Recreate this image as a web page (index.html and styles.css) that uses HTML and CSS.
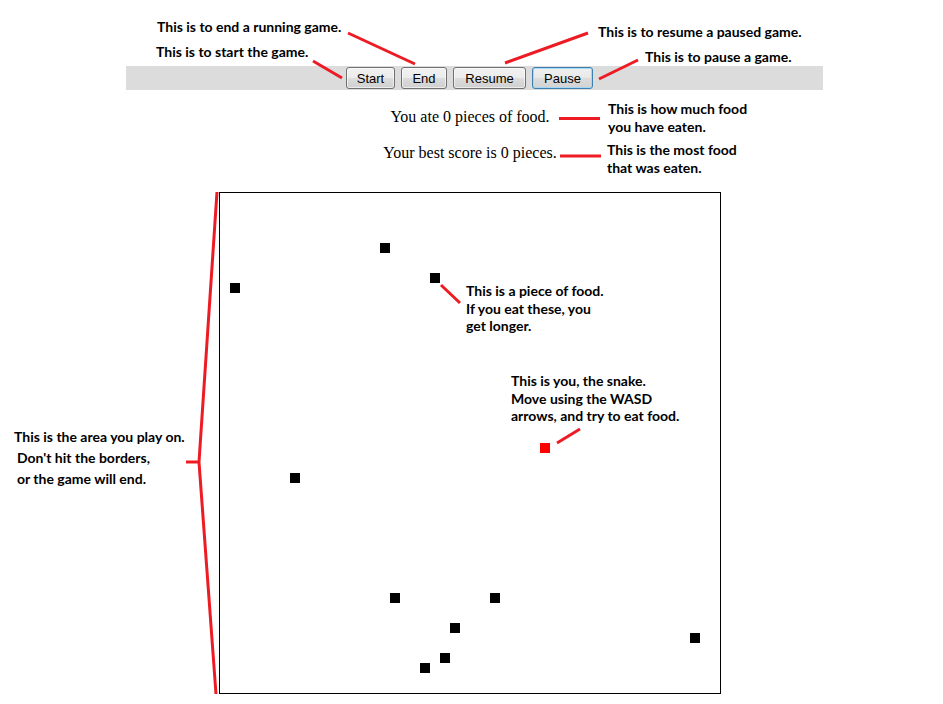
FILE: index.html
```html
<!DOCTYPE html>
<html>
<head>
<meta charset="utf-8">
<title>Snake</title>
<link rel="stylesheet" href="styles.css">
</head>
<body>
<div class="page">
  <div class="toolbar">
    <button class="btn btn-start">Start</button>
    <button class="btn btn-end">End</button>
    <button class="btn btn-resume">Resume</button>
    <button class="btn btn-pause btn-focus">Pause</button>
  </div>
  <div class="main">
    <p class="score">You ate 0 pieces of food.</p>
    <p class="score">Your best score is 0 pieces.</p>
    <div class="board">
      <span class="food" style="left:160px;top:50px"></span>
      <span class="food" style="left:10px;top:90px"></span>
      <span class="food" style="left:210px;top:80px"></span>
      <span class="food" style="left:70px;top:280px"></span>
      <span class="food" style="left:170px;top:400px"></span>
      <span class="food" style="left:270px;top:400px"></span>
      <span class="food" style="left:230px;top:430px"></span>
      <span class="food" style="left:470px;top:440px"></span>
      <span class="food" style="left:220px;top:460px"></span>
      <span class="food" style="left:200px;top:470px"></span>
      <span class="food snake" style="left:320px;top:250px"></span>
    </div>
  </div>

  <svg class="marks" width="943" height="704" viewBox="0 0 943 704">
    <g stroke="#ed1c24" stroke-width="3" fill="none">
      <line x1="348" y1="33" x2="415" y2="64"/>
      <line x1="313" y1="61" x2="342" y2="78"/>
      <line x1="588" y1="33" x2="505" y2="63"/>
      <line x1="638" y1="60" x2="599" y2="79"/>
      <line x1="559" y1="118.5" x2="600" y2="118.5"/>
      <line x1="560" y1="156" x2="601" y2="156"/>
      <line x1="441" y1="285" x2="460" y2="303"/>
      <line x1="580" y1="429" x2="557" y2="443"/>
      <polyline points="217,192 199,462 216,694"/>
      <line x1="186" y1="462" x2="199" y2="462"/>
    </g>
  </svg>

  <div class="note note-end">This is to end a running game.</div>
  <div class="note note-start">This is to start the game.</div>
  <div class="note note-resume">This is to resume a paused game.</div>
  <div class="note note-pause">This is to pause a game.</div>
  <div class="note note-eaten">This is how much food<br>you have eaten.</div>
  <div class="note note-most">This is the most food<br>that was eaten.</div>
  <div class="note note-food">This is a piece of food.<br>If you eat these, you<br>get longer.</div>
  <div class="note note-snake">This is you, the snake.<br>Move using the WASD<br>arrows, and try to eat food.</div>
  <div class="note note-area">This is the area you play on.<br><span class="indent">Don't hit the borders,</span><br><span class="indent">or the game will end.</span></div>
</div>
</body>
</html>
```

FILE: styles.css
```css
html, body {
  margin: 0;
  padding: 0;
  background: #ffffff;
}

.page {
  position: relative;
  width: 943px;
  height: 704px;
  overflow: hidden;
  padding-top: 66px;
  box-sizing: border-box;
}

.toolbar {
  margin-left: 126px;
  width: 697px;
  height: 24px;
  background: #dcdcdc;
  display: flex;
  align-items: center;
  gap: 6px;
  padding-left: 220px;
  box-sizing: border-box;
}

.btn {
  height: 22px;
  margin: 0;
  padding: 0;
  box-sizing: border-box;
  font-family: "Liberation Sans", Arial, sans-serif;
  font-size: 13px;
  color: #000;
  border: 1px solid #707070;
  border-radius: 3px;
  background: linear-gradient(to bottom, #f2f2f2 0%, #ebebeb 50%, #dddddd 51%, #cfcfcf 100%);
  box-shadow: inset 0 0 0 1px rgba(255,255,255,0.6);
}

.btn-start { width: 49px; }
.btn-end { width: 46px; }
.btn-resume { width: 73px; }
.btn-pause { width: 61px; }

.btn-focus {
  border-color: #3c7fb1;
  box-shadow: inset 0 0 0 1px #a6d8f5;
  background: linear-gradient(to bottom, #f0f0f0 0%, #e8e8e8 50%, #dcdcdc 51%, #d2d2d2 100%);
}

.main {
  margin-left: 219px;
  width: 502px;
  text-align: center;
}

.score {
  margin: 18px 0 0;
  font-family: "Liberation Serif", "Times New Roman", serif;
  font-size: 16px;
  line-height: 18px;
  color: #000;
}

.board {
  position: relative;
  margin-top: 30px;
  width: 500px;
  height: 500px;
  border: 1px solid #000;
}

.food {
  position: absolute;
  width: 10px;
  height: 10px;
  background: #000;
}

.snake {
  background: #ff0000;
}

.marks {
  position: absolute;
  left: 0;
  top: 0;
  pointer-events: none;
}

.note {
  position: absolute;
  font-family: Lato, "Open Sans", sans-serif;
  font-weight: 700;
  font-size: 14px;
  line-height: 18px;
  color: #000;
  white-space: nowrap;
}

.note-end { left: 157px; top: 18px; }
.note-start { left: 156px; top: 43px; }
.note-resume { left: 598px; top: 23px; }
.note-pause { left: 645px; top: 48px; }
.note-eaten { left: 608px; top: 100px; }
.note-most { left: 607px; top: 141px; }
.note-food { left: 466px; top: 282px; line-height: 17.5px; }
.note-snake { left: 511px; top: 372px; line-height: 17.5px; }
.note-area { left: 14px; top: 426px; line-height: 21px; }
.indent { padding-left: 3px; }
```
